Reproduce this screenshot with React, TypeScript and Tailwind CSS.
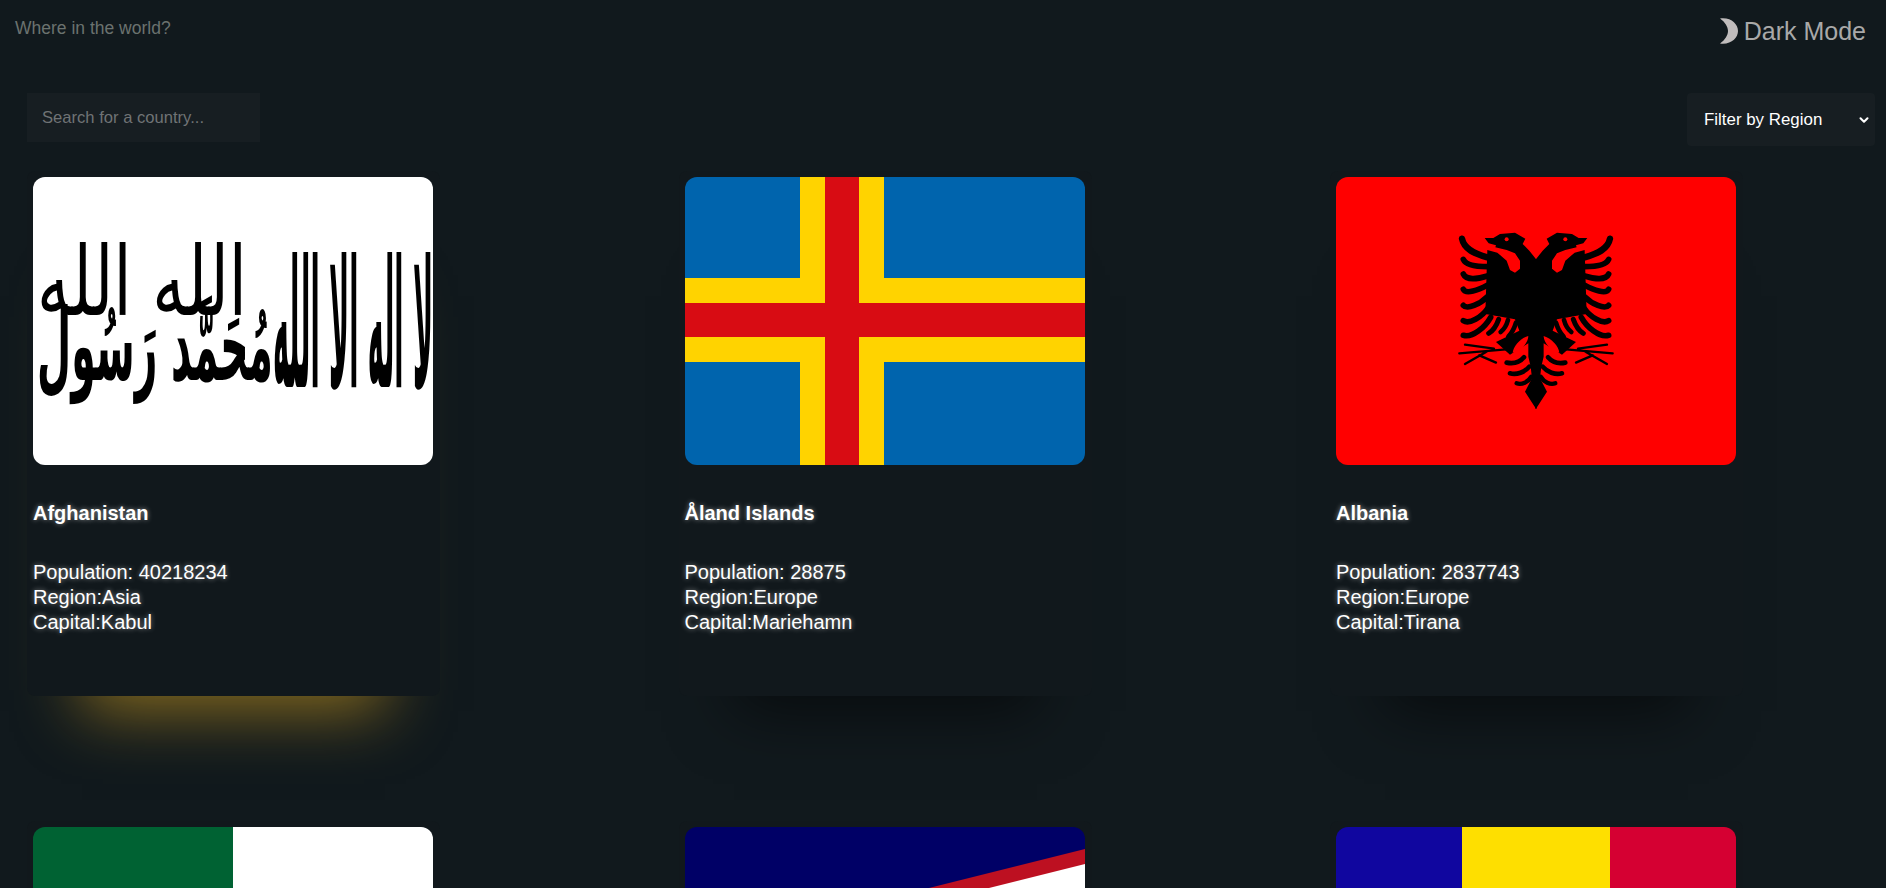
import { ChevronDown } from "lucide-react";
import type { ReactNode } from "react";

function Afghanistan() {
    return (
        <svg viewBox="0 0 400 288" className="block h-full w-full">
            <rect width="400" height="288" fill="#ffffff" />
            <text fontFamily="'DejaVu Sans', sans-serif" fill="#000000" direction="rtl" textAnchor="middle">
                <tspan x="320" y="210" fontSize="178" fontWeight="700" textLength="160" lengthAdjust="spacingAndGlyphs">
                    لا اله الا الله
                </tspan>
                <tspan x="109" y="138" fontSize="96" textLength="210" lengthAdjust="spacingAndGlyphs">
                    الله الله
                </tspan>
                <tspan x="122" y="203" fontSize="100" fontWeight="700" textLength="236" lengthAdjust="spacingAndGlyphs">
                    مُحَمَّد رَسُول
                </tspan>
            </text>
        </svg>
    );
}

function Aland() {
    return (
        <svg viewBox="0 0 400 288" className="block h-full w-full">
            <rect width="400" height="288" fill="#0064ad" />
            <rect x="115" width="84" height="288" fill="#ffd300" />
            <rect y="101" width="400" height="84" fill="#ffd300" />
            <rect x="140" width="34" height="288" fill="#d80c13" />
            <rect y="126" width="400" height="34" fill="#d80c13" />
        </svg>
    );
}

function EagleHalf() {
    return (
        <g fill="none" stroke="#000000" strokeLinecap="round">
            <path
                fill="#000000"
                stroke="none"
                d="M410 150 L388 122 L368 102 L376 86 L345 68 L300 72 L280 84 L254 84 L266 100 L288 106 L286 112 L320 120 L345 130 L360 152 L360 176 L345 188 L330 180 L320 152 L292 128 L262 120 L256 312 L345 328 L358 362 L288 396 L330 434 L352 420 L385 400 L385 440 L392 470 L396 505 L375 545 L408 596 L410 596 Z"
            />
            <path d="M385 378 C360 385 340 410 338 428 C360 425 385 400 385 378Z" fill="#ff0000" stroke="none" />
            <path d="M262 142 C225 132 192 118 186 86" strokeWidth="19" />
            <path d="M262 170 C230 170 198 166 190 148" strokeWidth="17" />
            <path d="M262 198 C230 208 198 210 190 192" strokeWidth="17" />
            <path d="M262 226 C235 240 198 254 190 238" strokeWidth="17" />
            <path d="M262 260 C240 282 202 300 190 286" strokeWidth="17" />
            <path d="M264 294 C245 322 208 344 190 332" strokeWidth="17" />
            <path d="M272 322 C255 352 218 384 190 376" strokeWidth="17" />
            <path d="M296 328 C290 345 280 362 266 370" strokeWidth="15" />
            <path d="M324 330 C320 345 312 358 302 366" strokeWidth="14" />
            <path d="M348 338 C343 355 335 370 325 380" strokeWidth="14" />
            <path d="M318 418 L178 430 M282 416 L195 404 M262 424 L195 462 M238 436 L288 458" strokeWidth="7" />
            <path d="M372 442 C360 456 340 462 320 458" strokeWidth="14" />
            <path d="M388 470 C375 486 350 496 330 490" strokeWidth="14" />
            <path d="M394 500 C385 516 365 526 350 520" strokeWidth="13" />
            <circle cx="320" cy="88" r="6" fill="#ff0000" stroke="none" />
        </g>
    );
}

function Albania() {
    return (
        <svg viewBox="0 0 400 288" className="block h-full w-full">
            <rect width="400" height="288" fill="#ff0000" />
            <g transform="translate(64 33) scale(0.3333)">
                <EagleHalf />
                <g transform="translate(816 0) scale(-1 1)">
                    <EagleHalf />
                </g>
            </g>
        </svg>
    );
}

function Algeria() {
    return (
        <svg viewBox="0 0 400 288" className="block h-full w-full">
            <rect width="200" height="288" fill="#006233" />
            <rect x="200" width="200" height="288" fill="#ffffff" />
            <circle cx="200" cy="144" r="72" fill="#d21034" />
            <circle cx="218" cy="144" r="58" fill="#ffffff" />
        </svg>
    );
}

function AmericanSamoa() {
    return (
        <svg viewBox="0 0 400 288" className="block h-full w-full">
            <rect width="400" height="288" fill="#000066" />
            <polygon points="400,22 0,122 0,166 400,288" fill="#bd1021" />
            <polygon points="400,37 60,122 60,166 400,273" fill="#ffffff" />
        </svg>
    );
}

function Andorra() {
    return (
        <svg viewBox="0 0 400 288" className="block h-full w-full">
            <rect width="126" height="288" fill="#10069f" />
            <rect x="126" width="148" height="288" fill="#fedf00" />
            <rect x="274" width="126" height="288" fill="#d50032" />
        </svg>
    );
}

type Country = {
    name: string;
    population: number;
    region: string;
    capital: string;
    flag: ReactNode;
    gold?: boolean;
};

const countries: Country[] = [
    { name: "Afghanistan", population: 40218234, region: "Asia", capital: "Kabul", flag: <Afghanistan />, gold: true },
    { name: "Åland Islands", population: 28875, region: "Europe", capital: "Mariehamn", flag: <Aland /> },
    { name: "Albania", population: 2837743, region: "Europe", capital: "Tirana", flag: <Albania /> },
    { name: "Algeria", population: 43851044, region: "Africa", capital: "Algiers", flag: <Algeria /> },
    { name: "American Samoa", population: 55197, region: "Oceania", capital: "Pago Pago", flag: <AmericanSamoa /> },
    { name: "Andorra", population: 77265, region: "Europe", capital: "Andorra la Vella", flag: <Andorra /> },
];

function CountryCard({ country }: { country: Country }) {
    return (
        <div
            className={`h-[525px] rounded-lg bg-[#11181c] pl-1.5 pt-1.5 ${
                country.gold
                    ? "shadow-[0_70px_60px_-55px_rgba(218,165,32,0.58)]"
                    : "shadow-[0_70px_60px_-55px_rgba(0,0,0,0.55)]"
            }`}
        >
            <div className="h-[288px] w-[400px] overflow-hidden rounded-xl">{country.flag}</div>
            <div className="text-white [text-shadow:0_0_5px_rgba(255,255,255,0.5)]">
                <h2 className="mt-[37px] text-[20px] leading-[22px] font-bold">{country.name}</h2>
                <div className="mt-[36px] text-[20px] leading-[25px]">
                    <p>Population: {country.population}</p>
                    <p>Region:{country.region}</p>
                    <p>Capital:{country.capital}</p>
                </div>
            </div>
        </div>
    );
}

export default function App() {
    return (
        <div className="h-[888px] overflow-hidden bg-[#11191d] font-['Liberation_Sans',Arial,sans-serif]">
            <header className="flex h-[93px] items-start justify-between pr-[20px] pl-[15px]">
                <h1 className="mt-[18px] text-[17.5px] leading-5 text-[#6b726f]">Where in the world?</h1>
                <button className="mt-4 flex items-center gap-[5px] text-[25px] leading-[30px] text-[#a9a9a9]">
                    <svg viewBox="0 0 20 26" className="h-[26px] w-5" fill="#c0bcbc">
                        <path d="M1 .5C12-1 19 6 19 13s-7 14-18 12.500c5-3.500 8-8.500 8-12.500S6 4 1 .5Z" />
                    </svg>
                    Dark Mode
                </button>
            </header>

            <div className="flex items-start justify-between pr-[11px] pl-[27px]">
                <input
                    placeholder="Search for a country..."
                    className="h-[49px] w-[233px] bg-[#171e22] px-[15px] text-[16.6px] text-white outline-none placeholder:text-[#6f7375]"
                />
                <div className="relative">
                    <select className="h-[53px] w-[188px] appearance-none rounded bg-[#171e22] pl-[17px] text-[16.9px] text-white outline-none">
                        <option>Filter by Region</option>
                        <option>Africa</option>
                        <option>Americas</option>
                        <option>Asia</option>
                        <option>Europe</option>
                        <option>Oceania</option>
                    </select>
                    <ChevronDown
                        className="pointer-events-none absolute top-[20px] right-[4px] h-[14px] w-[14px] text-white"
                        strokeWidth={3.5}
                    />
                </div>
            </div>

            <main className="mt-[25px] grid grid-cols-[repeat(3,413px)] justify-between gap-y-[125px] pr-[143px] pl-[27px]">
                {countries.map((country) => (
                    <CountryCard key={country.name} country={country} />
                ))}
            </main>
        </div>
    );
}
